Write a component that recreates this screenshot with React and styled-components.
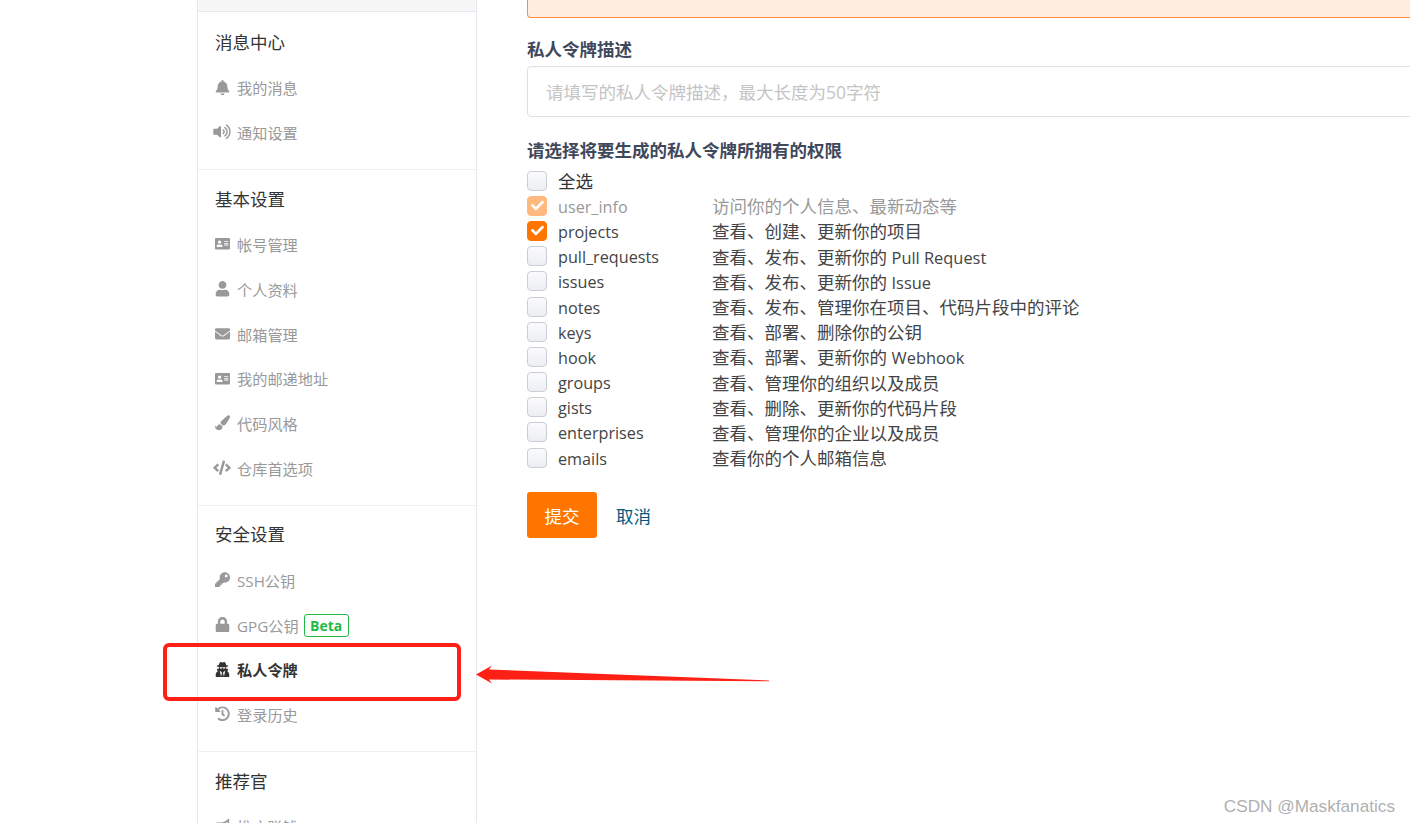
import React from 'react'
import styled, { createGlobalStyle } from 'styled-components'
import {
  FaBell, FaVolumeUp, FaAddressCard, FaUser, FaEnvelope, FaPaintBrush, FaCode,
  FaKey, FaLock, FaUserSecret, FaHistory, FaBullhorn, FaCheck,
} from 'react-icons/fa'

const FONT = `"Open Sans", "Noto Sans CJK SC", sans-serif`

const GlobalStyle = createGlobalStyle`
  html, body { margin: 0; padding: 0; height: 823px; overflow: hidden; background: #fff; }
  body { font-family: ${FONT}; }
  * { box-sizing: border-box; }
`

const sections = [
  {
    title: '消息中心',
    items: [
      { icon: FaBell, label: '我的消息' },
      { icon: FaVolumeUp, label: '通知设置', wide: true },
    ],
  },
  {
    title: '基本设置',
    items: [
      { icon: FaAddressCard, label: '帐号管理' },
      { icon: FaUser, label: '个人资料' },
      { icon: FaEnvelope, label: '邮箱管理' },
      { icon: FaAddressCard, label: '我的邮递地址' },
      { icon: FaPaintBrush, label: '代码风格' },
      { icon: FaCode, label: '仓库首选项', wide: true },
    ],
  },
  {
    title: '安全设置',
    items: [
      { icon: FaKey, label: 'SSH公钥' },
      { icon: FaLock, label: 'GPG公钥', badge: 'Beta' },
      { icon: FaUserSecret, label: '私人令牌', active: true },
      { icon: FaHistory, label: '登录历史' },
    ],
  },
  {
    title: '推荐官',
    items: [{ icon: FaBullhorn, label: '推广赚钱' }],
  },
]

const perms = [
  { name: '全选', dark: true },
  { name: 'user_info', desc: '访问你的个人信息、最新动态等', checked: true, disabled: true },
  { name: 'projects', desc: '查看、创建、更新你的项目', checked: true },
  { name: 'pull_requests', desc: '查看、发布、更新你的 ', en: 'Pull Request' },
  { name: 'issues', desc: '查看、发布、更新你的 ', en: 'Issue' },
  { name: 'notes', desc: '查看、发布、管理你在项目、代码片段中的评论' },
  { name: 'keys', desc: '查看、部署、删除你的公钥' },
  { name: 'hook', desc: '查看、部署、更新你的 ', en: 'Webhook' },
  { name: 'groups', desc: '查看、管理你的组织以及成员' },
  { name: 'gists', desc: '查看、删除、更新你的代码片段' },
  { name: 'enterprises', desc: '查看、管理你的企业以及成员' },
  { name: 'emails', desc: '查看你的个人邮箱信息' },
]

export default function App() {
  return (
    <Page>
      <GlobalStyle />
      <Sidebar>
        <SideTop />
        {sections.map((section) => (
          <Section key={section.title}>
            <SectionTitle>{section.title}</SectionTitle>
            {section.items.map((item) => (
              <NavItem key={item.label} $active={item.active}>
                <NavIcon $wide={item.wide}><item.icon /></NavIcon>
                {item.label}
                {item.badge && <Badge>{item.badge}</Badge>}
              </NavItem>
            ))}
          </Section>
        ))}
      </Sidebar>
      <Main>
        <Alert />
        <FieldLabel>私人令牌描述</FieldLabel>
        <Input placeholder="请填写的私人令牌描述，最大长度为50字符" />
        <PermTitle>请选择将要生成的私人令牌所拥有的权限</PermTitle>
        <PermList>
          {perms.map((perm) => (
            <PermRow key={perm.name} $disabled={perm.disabled}>
              <Check $checked={perm.checked} $disabled={perm.disabled}>{perm.checked && <FaCheck />}</Check>
              <PermName $dark={perm.dark}>{perm.name}</PermName>
              <PermDesc>{perm.desc}{perm.en && <PermLatin>{perm.en}</PermLatin>}</PermDesc>
            </PermRow>
          ))}
        </PermList>
        <Actions>
          <SubmitButton>提交</SubmitButton>
          <CancelLink>取消</CancelLink>
        </Actions>
      </Main>

      <RedBox />
      <Arrow viewBox="0 0 300 20" width="300" height="20">
        <path d="M0 9.5 L16 0.5 L13 4.5 L293 15.5 L293 16.3 L13 14.5 L16 18.5 Z" fill="#ff2015" />
      </Arrow>
      <Watermark>CSDN @Maskfanatics</Watermark>
    </Page>
  )
}

const Page = styled.div`
  position: relative;
  display: flex;
  align-items: flex-start;
  width: 1410px;
  height: 823px;
  padding-left: 197px;
  overflow: hidden;
`

const Sidebar = styled.aside`
  flex: 0 0 280px;
  height: 900px;
  border-left: 1px solid #e2e8ef;
  border-right: 1px solid #e2e8ef;
`

const SideTop = styled.div`
  height: 12px;
  margin-bottom: 1.4px;
  background: #f7f7f7;
  border-bottom: 1px solid #e6e9ee;
`

const Section = styled.section`
  padding: 11.6px 0 14.4px;
  border-bottom: 1px solid #f0f0f0;
`

const SectionTitle = styled.h3`
  margin: 0 0 6px 17px;
  height: 34px;
  line-height: 34px;
  font-size: 17.5px;
  font-weight: 400;
  color: #333;
`

const NavItem = styled.div`
  display: flex;
  align-items: center;
  height: 44.8px;
  padding-left: 16px;
  font-size: 15.2px;
  font-weight: ${(p) => (p.$active ? 700 : 400)};
  color: ${(p) => (p.$active ? '#333' : '#999')};
`

const NavIcon = styled.span`
  display: flex;
  justify-content: center;
  flex: 0 0 16px;
  min-width: 0;
  margin-right: 7px;
  font-size: 15.5px;
  svg { width: ${(p) => (p.$wide ? '18px' : '15px')}; flex: none; }
`

const Badge = styled.span`
  display: inline-flex;
  align-items: center;
  justify-content: center;
  width: 45px;
  height: 23px;
  margin: 2px 0 0 5px;
  border: 1px solid #21ba45;
  border-radius: 3px;
  color: #21ba45;
  font-size: 14px;
  font-weight: 700;
`

const Main = styled.main`
  flex: 0 0 1000px;
  margin-left: 50px;
`

const Alert = styled.div`
  height: 18px;
  background: #ffeee0;
  border: 1px solid #ff8a40;
  border-top: none;
  border-radius: 0 0 4px 4px;
`

const FieldLabel = styled.div`
  margin: 17px 0 3px;
  height: 28px;
  line-height: 28px;
  font-size: 17.5px;
  font-weight: 700;
  color: #40485b;
`

const Input = styled.input`
  display: block;
  width: 100%;
  height: 51px;
  padding: 0 18px;
  border: 1px solid #dcdfe6;
  border-radius: 4px;
  outline: none;
  font-family: ${FONT};
  font-size: 17.5px;
  &::placeholder { color: #c4c4c4; opacity: 1; }
`

const PermTitle = styled(FieldLabel)`
  margin-top: 19px;
`

const PermList = styled.div`
  margin-top: 5px;
`

const PermRow = styled.div`
  display: grid;
  grid-template-columns: 31px 154px 1fr;
  align-items: center;
  height: 25.2px;
  font-size: 17.5px;
  color: ${(p) => (p.$disabled ? '#999' : '#444')};
`

const PermName = styled.span`
  font-size: ${(p) => (p.$dark ? '17.5px' : '16.2px')};
  margin-top: ${(p) => (p.$dark ? '-3px' : '0')};
  color: ${(p) => (p.$dark ? '#333' : 'inherit')};
`

const PermDesc = styled.span`
  margin-top: -2px;
`

const PermLatin = styled.span`
  font-size: 16.4px;
`

const Check = styled.span`
  display: flex;
  align-items: center;
  justify-content: center;
  width: 20px;
  height: 20px;
  margin-top: -2px;
  border-radius: 4px;
  border: 1px solid ${(p) => (p.$checked ? '#ff7500' : '#c9ced6')};
  background: ${(p) => (p.$checked ? '#ff7500' : 'linear-gradient(#fbfbfc, #eceef2)')};
  color: #fff;
  font-size: 13px;
  opacity: ${(p) => (p.$disabled ? 0.5 : 1)};
`

const Actions = styled.div`
  display: flex;
  align-items: center;
  gap: 19px;
  margin-top: 21px;
`

const SubmitButton = styled.button`
  width: 70px;
  height: 46px;
  border: none;
  border-radius: 3px;
  background: #ff7500;
  color: #fff;
  font-family: ${FONT};
  font-size: 17.5px;
`

const CancelLink = styled.a`
  font-size: 17.5px;
  color: #005980;
`

const RedBox = styled.div`
  position: absolute;
  left: 163px;
  top: 643px;
  width: 298px;
  height: 58px;
  border: 4px solid #ff2015;
  border-radius: 6px;
`

const Arrow = styled.svg`
  position: absolute;
  left: 476px;
  top: 665px;
`

const Watermark = styled.div`
  position: absolute;
  right: 15px;
  bottom: 6px;
  font-family: "Liberation Sans", sans-serif;
  font-size: 17.2px;
  color: #b0b0b0;
`
